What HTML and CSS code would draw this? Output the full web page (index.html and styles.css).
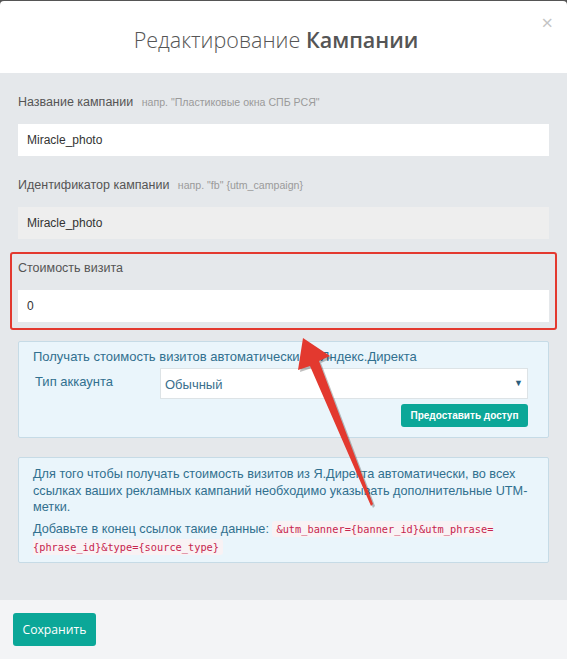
FILE: index.html
```html
<!DOCTYPE html>
<html lang="ru">

<head>
    <meta charset="UTF-8">
    <meta name="viewport" content="width=device-width, initial-scale=1.0">
    <title>Редактирование Кампании</title>
    <link rel="stylesheet" href="styles.css">
</head>

<body>
<div class="modal">
    <div class="modal-header">
        <h3 class="modal-title">Редактирование <b>Кампании</b></h3>
        <span class="close">&times;</span>
    </div>

    <div class="modal-body">
        <div class="form-group">
            <label class="label">Название кампании <small>напр. "Пластиковые окна СПБ РСЯ"</small></label>
            <div class="input">Miracle_photo</div>
        </div>
        <div class="form-group">
            <label class="label">Идентификатор кампании <small>напр. "fb" {utm_campaign}</small></label>
            <div class="input disabled">Miracle_photo</div>
        </div>

        <!-- выделено на скриншоте -->
        <div class="highlight">
            <label class="label">Стоимость визита</label>
            <div class="input">0</div>
        </div>

        <div class="info direct">
            <div class="info-title">Получать стоимость визитов автоматически из Яндекс.Директа</div>
            <div class="row">
                <span class="row-label">Тип аккаунта</span>
                <div class="select">Обычный <span class="caret">&#9660;</span></div>
            </div>
            <div class="actions">
                <button class="btn btn-small">Предоставить доступ</button>
            </div>
        </div>

        <div class="info note">
            <p>Для того чтобы получать стоимость визитов из Я.Директа автоматически, во всех ссылках ваших рекламных кампаний необходимо указывать дополнительные UTM-метки.</p>
            <p>Добавьте в конец ссылок такие данные: <code>&amp;utm_banner={banner_id}&amp;utm_phrase=<wbr>{phrase_id}&amp;type={source_type}</code></p>
        </div>
    </div>

    <div class="modal-footer">
        <button class="btn btn-save">Сохранить</button>
    </div>
</div>

<svg class="arrow" width="567" height="659" viewBox="0 0 567 659">
    <polygon class="arrow-shadow" points="303,338 330,356 319,361 373,504 371,506 310,366 298,370"/>
    <polygon class="arrow-body" points="303,338 330,356 319,361 373,504 371,506 310,366 298,370"/>
</svg>
</body>

</html>
```

FILE: styles.css
```css
body {
    margin: 0;
    background-color: #555;
    font-family: "Liberation Sans", Arial, sans-serif;
    position: relative;
}

.modal {
    margin-top: 1px;
    background-color: #fff;
    border-radius: 4px 4px 0 0;
    overflow: hidden;
}

.modal-header {
    height: 72px;
    position: relative;
    text-align: center;
}

.modal-title {
    margin: 0;
    padding: 21px 15px 0 0;
    font-family: "Open Sans", sans-serif;
    font-weight: 300;
    font-size: 21.5px;
    line-height: 36px;
    color: #555;
}

.modal-title b {
    font-weight: 600;
}

.close {
    position: absolute;
    top: 10px;
    right: 14px;
    font-family: "Open Sans", sans-serif;
    font-size: 20px;
    line-height: 24px;
    color: #c4c4c4;
}

.modal-body {
    background-color: #e5e8eb;
    padding: 20px 18px 37px;
}

.form-group {
    margin-bottom: 20px;
}

.label {
    display: block;
    font-size: 12.5px;
    line-height: 18px;
    color: #555;
    margin-bottom: 13px;
}

.label small {
    font-size: 10.6px;
    color: #9a9a9a;
    margin-left: 5px;
}

.input {
    height: 32px;
    line-height: 32px;
    padding: 0 9px;
    background-color: #fff;
    font-size: 12px;
    color: #333;
}

.input.disabled {
    background-color: #eee;
}

.highlight {
    margin: -7px -8px 0;
    padding: 5px 6px 6px;
    border: 2px solid #e3392f;
    border-radius: 3px;
}

.info {
    background-color: #eaf5fb;
    border: 1px solid #c6dbe6;
    border-radius: 2px;
    color: #31708f;
    font-size: 13px;
}

.direct {
    margin-top: 11px;
    padding: 6px 20px 10px 14px;
}

.info-title {
    line-height: 18px;
}

.row {
    display: flex;
    align-items: flex-start;
    margin-top: 2px;
}

.row-label {
    width: 125px;
    padding-left: 2px;
    line-height: 28px;
}

.select {
    flex: 1;
    display: flex;
    justify-content: space-between;
    height: 29px;
    line-height: 31px;
    padding: 0 4px;
    background-color: #fff;
    border: 1px solid #dde3e6;
    color: #3b6f8d;
}

.caret {
    font-size: 9px;
    color: #2c5d7c;
    line-height: 28px;
}

.actions {
    display: flex;
    justify-content: flex-end;
    margin-top: 5px;
}

.btn {
    border: none;
    color: white;
    background-color: #0ba798;
    border-radius: 3px;
    cursor: pointer;
}

.btn-small {
    width: 127px;
    height: 23px;
    padding: 0;
    font-family: "Liberation Sans", Arial, sans-serif;
    font-weight: bold;
    font-size: 10px;
}

.note {
    margin-top: 19px;
    padding: 8px 14px 6px;
    font-size: 12.7px;
}

.note p {
    margin: 0;
    line-height: 16.5px;
}

.note p + p {
    margin-top: 4px;
    line-height: 18px;
}

code {
    font-family: "DejaVu Sans Mono", monospace;
    font-size: 10.3px;
    color: #c7254e;
    background-color: #f9f2f4;
    padding: 2px 4px;
    border-radius: 3px;
}

.modal-footer {
    background-color: #f3f4f6;
    padding: 13px;
}

.btn-save {
    width: 83px;
    height: 33px;
    font-family: "Open Sans", sans-serif;
    font-size: 12.2px;
}

.arrow {
    position: absolute;
    left: 0;
    top: 0;
    pointer-events: none;
}

.arrow-body {
    fill: #e3392f;
}

.arrow-shadow {
    fill: rgba(0, 0, 0, 0.25);
    transform: translate(2px, 2px);
}
```
